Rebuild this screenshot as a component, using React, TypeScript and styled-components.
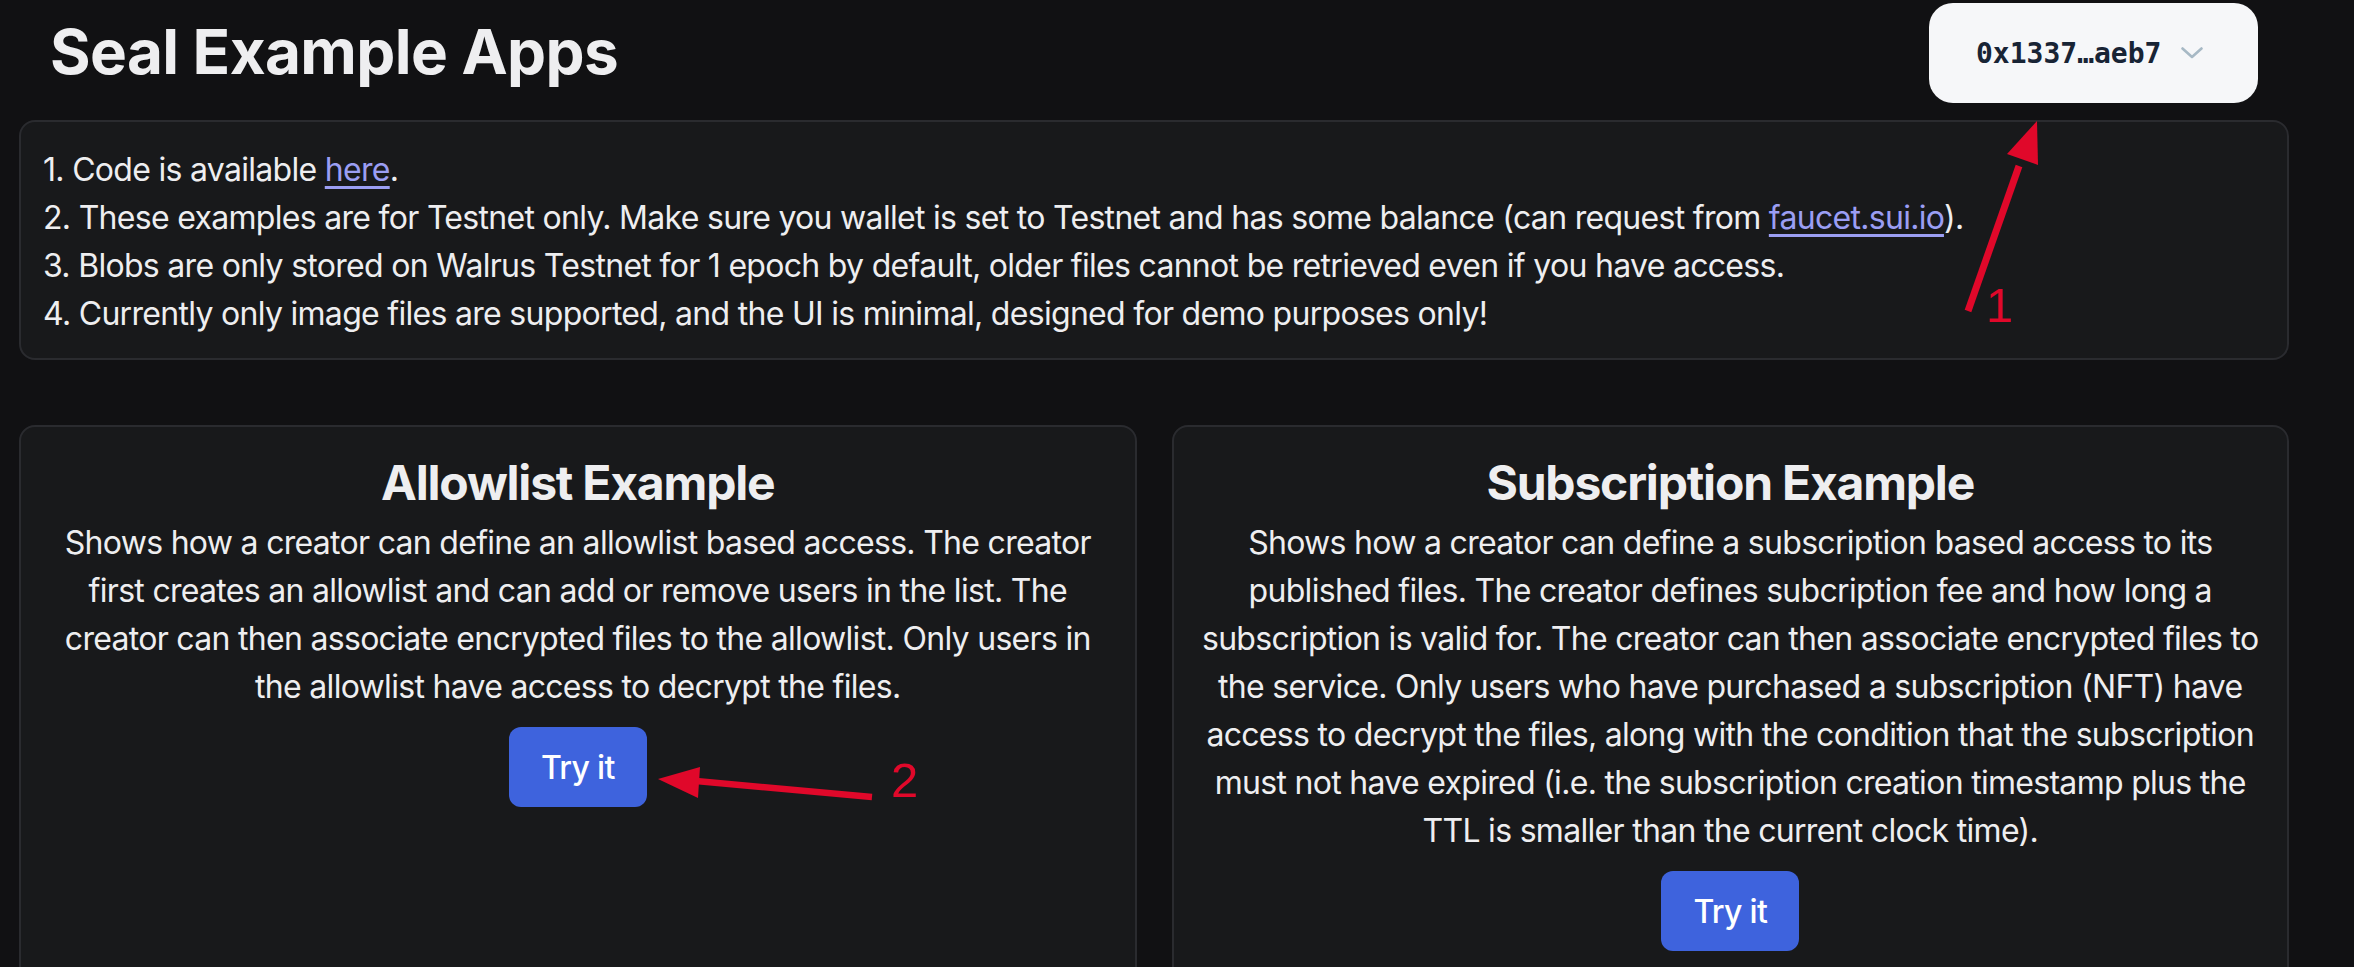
import React from "react";
import styled, { createGlobalStyle } from "styled-components";

const GlobalStyle = createGlobalStyle`
  html, body {
    margin: 0;
    padding: 0;
    background: #111113;
    color: #eeeef0;
    font-family: Inter, "Noto Sans", sans-serif;
  }
  * { box-sizing: border-box; }
`;

const examples = [
  {
    title: "Allowlist Example",
    description:
      "Shows how a creator can define an allowlist based access. The creator first creates an allowlist and can add or remove users in the list. The creator can then associate encrypted files to the allowlist. Only users in the allowlist have access to decrypt the files."
  },
  {
    title: "Subscription Example",
    description:
      "Shows how a creator can define a subscription based access to its published files. The creator defines subcription fee and how long a subscription is valid for. The creator can then associate encrypted files to the service. Only users who have purchased a subscription (NFT) have access to decrypt the files, along with the condition that the subscription must not have expired (i.e. the subscription creation timestamp plus the TTL is smaller than the current clock time)."
  }
];

const Info = () => (
  <InfoCard>
    <InfoLine>
      1. Code is available <Link href="#">here</Link>.
    </InfoLine>
    <InfoLine>
      2. These examples are for Testnet only. Make sure you wallet is set to Testnet and has some
      balance (can request from <Link href="#">faucet.sui.io</Link>).
    </InfoLine>
    <InfoLine>
      3. Blobs are only stored on Walrus Testnet for 1 epoch by default, older files cannot be
      retrieved even if you have access.
    </InfoLine>
    <InfoLine>
      4. Currently only image files are supported, and the UI is minimal, designed for demo
      purposes only!
    </InfoLine>
  </InfoCard>
);

const App = () => (
  <>
    <GlobalStyle />
    <Page>
      <Header>
        <Title>Seal Example Apps</Title>
        <WalletButton>
          <Address>0x1337…aeb7</Address>
          <svg width="22" height="12" viewBox="0 0 22 12" fill="none">
            <polyline
              points="1.5,1.5 11,10 20.5,1.5"
              stroke="#a7b9c5"
              strokeWidth="2.6"
              strokeLinecap="round"
              strokeLinejoin="round"
            />
          </svg>
        </WalletButton>
      </Header>

      <Info />

      <ExampleGrid>
        {examples.map((ex) => (
          <ExampleCard key={ex.title}>
            <CardTitle>{ex.title}</CardTitle>
            <CardText>{ex.description}</CardText>
            <TryButton>Try it</TryButton>
          </ExampleCard>
        ))}
      </ExampleGrid>

      <Annotations width="2354" height="967" viewBox="0 0 2354 967">
        <line x1="1968" y1="311" x2="2019" y2="166" stroke="#e0082a" strokeWidth="7" />
        <polygon points="2037,121 2007,154 2038,165" fill="#e0082a" />
        <AnnotationNumber x="1986" y="322">1</AnnotationNumber>

        <line x1="872" y1="797" x2="696" y2="781" stroke="#e0082a" strokeWidth="6.5" />
        <polygon points="658,779 700,767 698,798" fill="#e0082a" />
        <AnnotationNumber x="891" y="797">2</AnnotationNumber>
      </Annotations>
    </Page>
  </>
);

const Page = styled.div`
  position: relative;
  height: 967px;
  padding: 3px 65px 0 19px;
  overflow: hidden;
`;

const Header = styled.header`
  display: flex;
  align-items: center;
  justify-content: space-between;
  height: 100px;
  padding: 0 31px;
`;

const Title = styled.h1`
  margin: 0;
  font-size: 62px;
  font-weight: 700;
  letter-spacing: -0.6px;
  line-height: 1.2;
  color: #eeeef0;
  transform: translateY(-1px);
`;

const WalletButton = styled.button`
  display: flex;
  align-items: center;
  gap: 20px;
  width: 329px;
  height: 100px;
  padding: 0 0 0 47px;
  border: none;
  border-radius: 24px;
  background: #f6f7f9;
  cursor: pointer;
`;

const Address = styled.span`
  font-family: "DejaVu Sans Mono", "Liberation Mono", monospace;
  font-size: 28px;
  font-weight: 700;
  color: #182435;
`;

const InfoCard = styled.section`
  margin-top: 17px;
  padding: 24px 22px 20px;
  border: 2px solid #2a2b2f;
  border-radius: 16px;
  background: #18191b;
`;

const InfoLine = styled.div`
  font-size: 32px;
  line-height: 48px;
  letter-spacing: -0.7px;
  color: #eeeef0;
`;

const Link = styled.a`
  color: #9b9ef3;
  text-decoration: underline;
  text-decoration-thickness: 3px;
  text-underline-offset: 5px;
`;

const ExampleGrid = styled.div`
  display: grid;
  grid-template-columns: 1fr 1fr;
  gap: 35px;
  margin-top: 65px;
`;

const ExampleCard = styled.article`
  display: flex;
  flex-direction: column;
  align-items: center;
  min-height: 620px;
  padding: 26px 24px;
  border: 2px solid #2a2b2f;
  border-radius: 16px;
  background: #18191b;
  text-align: center;
`;

const CardTitle = styled.h2`
  margin: 0;
  font-size: 48px;
  font-weight: 700;
  line-height: 60px;
  letter-spacing: -1.2px;
  color: #eeeef0;
`;

const CardText = styled.p`
  margin: 6px 0 0;
  font-size: 32px;
  line-height: 48px;
  letter-spacing: -0.7px;
  color: #eeeef0;
`;

const TryButton = styled.button`
  margin-top: 16px;
  height: 80px;
  padding: 0 32px;
  border: none;
  border-radius: 12px;
  background: #3e63dd;
  color: #ffffff;
  font-family: Inter, "Noto Sans", sans-serif;
  font-size: 32px;
  font-weight: 500;
  letter-spacing: -0.7px;
  cursor: pointer;
`;

const Annotations = styled.svg`
  position: absolute;
  top: 0;
  left: 0;
  pointer-events: none;
`;

const AnnotationNumber = styled.text`
  font-family: "Liberation Sans", Arial, sans-serif;
  font-size: 49px;
  fill: #e0082a;
`;

export default App;
